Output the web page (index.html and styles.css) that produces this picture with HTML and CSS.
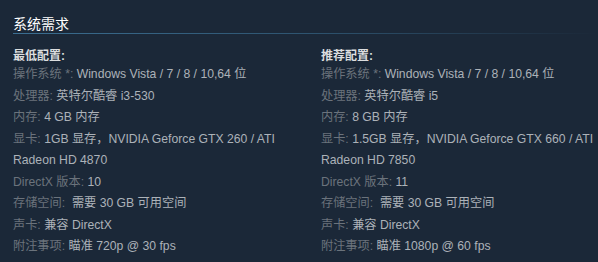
FILE: index.html
```html
<!DOCTYPE html>
<html lang="zh-CN">
<head>
<meta charset="utf-8">
<link rel="stylesheet" href="styles.css">
</head>
<body>
<div class="sysreq">
  <h2 class="title">系统需求</h2>
  <div class="cols">
    <div class="col">
      <div class="colhead">最低配置:</div>
      <ul class="list">
        <li><span class="lbl">操作系统 *:</span> Windows Vista / 7 / 8 / 10,64 位</li>
        <li><span class="lbl">处理器:</span> 英特尔酷睿 i3-530</li>
        <li><span class="lbl">内存:</span> 4 GB 内存</li>
        <li><span class="lbl">显卡:</span> 1GB 显存，NVIDIA Geforce GTX 260 / ATI Radeon HD 4870</li>
        <li><span class="lbl">DirectX 版本:</span> 10</li>
        <li><span class="lbl">存储空间:</span>&nbsp; 需要 30 GB 可用空间</li>
        <li><span class="lbl">声卡:</span> 兼容 DirectX</li>
        <li><span class="lbl">附注事项:</span> 瞄准 720p @ 30 fps</li>
      </ul>
    </div>
    <div class="col">
      <div class="colhead">推荐配置:</div>
      <ul class="list">
        <li><span class="lbl">操作系统 *:</span> Windows Vista / 7 / 8 / 10,64 位</li>
        <li><span class="lbl">处理器:</span> 英特尔酷睿 i5</li>
        <li><span class="lbl">内存:</span> 8 GB 内存</li>
        <li><span class="lbl">显卡:</span> 1.5GB 显存，NVIDIA Geforce GTX 660 / ATI Radeon HD 7850</li>
        <li><span class="lbl">DirectX 版本:</span> 11</li>
        <li><span class="lbl">存储空间:</span>&nbsp; 需要 30 GB 可用空间</li>
        <li><span class="lbl">声卡:</span> 兼容 DirectX</li>
        <li><span class="lbl">附注事项:</span> 瞄准 1080p @ 60 fps</li>
      </ul>
    </div>
  </div>
</div>
</body>
</html>
```
FILE: styles.css
```css
html, body {
  margin: 0;
  padding: 0;
  background: #1b2838;
  height: 100%;
  overflow: hidden;
}
.sysreq {
  padding: 15px 0 0 13px;
  font-family: "Liberation Sans", "Noto Sans CJK SC", sans-serif;
  font-size: 12.2px;
  color: #acb2b8;
}
.title {
  margin: 0;
  font-size: 14px;
  font-weight: normal;
  color: #ffffff;
  line-height: 18px;
  padding-bottom: 1px;
  background: linear-gradient(to right, #3b6e91 0%, #2e5470 50%, rgba(46,84,112,0) 100%) no-repeat left bottom / 100% 1px;
}
.cols {
  display: grid;
  grid-template-columns: 296px 296px;
  column-gap: 12px;
  width: 604px;
  margin-top: 12px;
}
.colhead {
  font-size: 12px;
  font-weight: bold;
  color: #dcdedf;
  line-height: 16px;
  padding-top: 2px;
  margin-bottom: 0;
}
.list {
  list-style: none;
  margin: 0;
  padding: 0;
  line-height: 21.5px;
}
.lbl {
  color: #6b737c;
}
```
